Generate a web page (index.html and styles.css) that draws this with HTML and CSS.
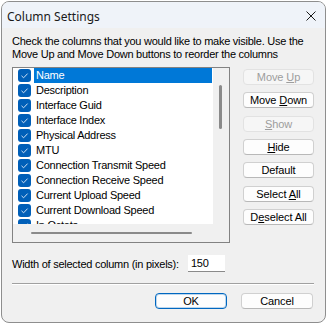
FILE: index.html
```html
<!DOCTYPE html>
<html>
<head>
<meta charset="utf-8">
<link rel="stylesheet" href="styles.css">
</head>
<body>
<div class="window">
  <div class="titlebar">
    <span class="title">Column Settings</span>
    <svg class="close" width="10" height="10" viewBox="0 0 10 10"><path d="M0.5 0.5 L9.5 9.5 M9.5 0.5 L0.5 9.5" stroke="#1a1a1a" stroke-width="1" fill="none"/></svg>
  </div>
  <div class="content">
    <p class="desc">Check the columns that you would like to make visible. Use the<br>Move Up and Move Down buttons to reorder the columns</p>
    <div class="main">
      <div class="listbox">
        <ul class="items">
          <li class="item selected"><span class="cb"><svg width="13" height="13" viewBox="0 0 13 13"><path d="M3.5 6.8 L5.6 8.8 L9.6 4.6" stroke="#cfe0f3" stroke-width="1" fill="none"/></svg></span><span class="label">Name</span></li>
          <li class="item"><span class="cb"><svg width="13" height="13" viewBox="0 0 13 13"><path d="M3.5 6.8 L5.6 8.8 L9.6 4.6" stroke="#cfe0f3" stroke-width="1" fill="none"/></svg></span><span class="label">Description</span></li>
          <li class="item"><span class="cb"><svg width="13" height="13" viewBox="0 0 13 13"><path d="M3.5 6.8 L5.6 8.8 L9.6 4.6" stroke="#cfe0f3" stroke-width="1" fill="none"/></svg></span><span class="label">Interface Guid</span></li>
          <li class="item"><span class="cb"><svg width="13" height="13" viewBox="0 0 13 13"><path d="M3.5 6.8 L5.6 8.8 L9.6 4.6" stroke="#cfe0f3" stroke-width="1" fill="none"/></svg></span><span class="label">Interface Index</span></li>
          <li class="item"><span class="cb"><svg width="13" height="13" viewBox="0 0 13 13"><path d="M3.5 6.8 L5.6 8.8 L9.6 4.6" stroke="#cfe0f3" stroke-width="1" fill="none"/></svg></span><span class="label">Physical Address</span></li>
          <li class="item"><span class="cb"><svg width="13" height="13" viewBox="0 0 13 13"><path d="M3.5 6.8 L5.6 8.8 L9.6 4.6" stroke="#cfe0f3" stroke-width="1" fill="none"/></svg></span><span class="label">MTU</span></li>
          <li class="item"><span class="cb"><svg width="13" height="13" viewBox="0 0 13 13"><path d="M3.5 6.8 L5.6 8.8 L9.6 4.6" stroke="#cfe0f3" stroke-width="1" fill="none"/></svg></span><span class="label">Connection Transmit Speed</span></li>
          <li class="item"><span class="cb"><svg width="13" height="13" viewBox="0 0 13 13"><path d="M3.5 6.8 L5.6 8.8 L9.6 4.6" stroke="#cfe0f3" stroke-width="1" fill="none"/></svg></span><span class="label">Connection Receive Speed</span></li>
          <li class="item"><span class="cb"><svg width="13" height="13" viewBox="0 0 13 13"><path d="M3.5 6.8 L5.6 8.8 L9.6 4.6" stroke="#cfe0f3" stroke-width="1" fill="none"/></svg></span><span class="label">Current Upload Speed</span></li>
          <li class="item"><span class="cb"><svg width="13" height="13" viewBox="0 0 13 13"><path d="M3.5 6.8 L5.6 8.8 L9.6 4.6" stroke="#cfe0f3" stroke-width="1" fill="none"/></svg></span><span class="label">Current Download Speed</span></li>
          <li class="item"><span class="cb"><svg width="13" height="13" viewBox="0 0 13 13"><path d="M3.5 6.8 L5.6 8.8 L9.6 4.6" stroke="#cfe0f3" stroke-width="1" fill="none"/></svg></span><span class="label">In Octets</span></li>
        </ul>
        <div class="vscroll"><div class="vthumb"></div></div>
        <div class="hscroll"><div class="hthumb"></div></div>
        <div class="corner"></div>
      </div>
      <div class="buttons">
        <button class="btn disabled">Move <u>U</u>p</button>
        <button class="btn">Move <u>D</u>own</button>
        <button class="btn disabled"><u>S</u>how</button>
        <button class="btn"><u>H</u>ide</button>
        <button class="btn">Default</button>
        <button class="btn">Select <u>A</u>ll</button>
        <button class="btn">D<u>e</u>select All</button>
      </div>
    </div>
    <div class="width-row">
      <span class="width-label">Width of selected column (in pixels):</span>
      <div class="input">150</div>
    </div>
    <div class="sep"></div>
    <div class="actions">
      <button class="btn primary">OK</button>
      <button class="btn">Cancel</button>
    </div>
  </div>
</div>
</body>
</html>
```

FILE: styles.css
```css
* { box-sizing: border-box; }
html, body { margin: 0; padding: 0; }
body { background: #ffffff; width: 327px; height: 324px; overflow: hidden; }

.window {
  margin: 1px 0 0 1px;
  width: 325px;
  height: 322px;
  border: 1px solid #8e8e8e;
  border-radius: 8px;
  background: #f0f0f0;
  overflow: hidden;
  font-family: "Liberation Sans", Arial, sans-serif;
  font-size: 11px;
  letter-spacing: -0.25px;
  color: #000;
}

.titlebar {
  height: 26px;
  background: #eff3f9;
  display: flex;
  align-items: center;
  justify-content: space-between;
  padding: 0 9px 0 5px;
}
.title {
  font-family: "Noto Sans", "Open Sans", sans-serif;
  font-size: 12px;
  letter-spacing: 0;
  color: #1a1a1a;
  padding-top: 2px;
}
.close { display: block; margin-top: 1px; }

.content { padding: 0 11px 0 10px; }

.desc {
  margin: 7px 0 0 0;
  line-height: 13px;
  white-space: nowrap;
}

.main {
  display: flex;
  gap: 13px;
  margin-top: 6px;
}

.listbox {
  width: 218px;
  height: 176px;
  border: 1px solid #828282;
  display: grid;
  grid-template-columns: 200px 16px;
  grid-template-rows: 156px 18px;
  background: #f0f0f0;
}

.items {
  list-style: none;
  margin: 0;
  padding: 0;
  background: #fff;
  overflow: hidden;
}
.item {
  height: 15px;
  display: flex;
  align-items: center;
  padding-left: 5px;
}
.cb {
  width: 13px;
  height: 13px;
  border-radius: 3px;
  background: #005fb8;
  display: block;
  flex: none;
}
.cb svg { display: block; }
.label {
  margin-left: 3px;
  padding-left: 2px;
  height: 15px;
  line-height: 15px;
  white-space: nowrap;
}
.item.selected .label {
  background: #0078d7;
  color: #fff;
  flex: 1;
  margin-right: 1px;
}

.vscroll {
  background: #f0f0f0;
  padding: 17px 0 0 6px;
}
.vthumb {
  width: 3px;
  height: 44px;
  background: #8a8a8a;
  border-radius: 1.5px;
}
.hscroll {
  background: #f0f0f0;
  padding: 8px 0 0 18px;
}
.hthumb {
  width: 161px;
  height: 2px;
  background: #8a8a8a;
  border-radius: 1px;
}
.corner { background: #f0f0f0; }

.buttons {
  display: flex;
  flex-direction: column;
  gap: 7.33px;
  margin-top: 2px;
}

.btn {
  font-family: "Liberation Sans", Arial, sans-serif;
  font-size: 11px;
  letter-spacing: -0.1px;
  color: #000;
  background: #fdfdfd;
  border: 1px solid #d0d0d0;
  border-bottom-color: #b8b8b8;
  border-radius: 4px;
  width: 71px;
  height: 16px;
  padding: 0;
  line-height: 14px;
  text-align: center;
  display: block;
}
.btn u { text-underline-offset: 1px; }
.btn.disabled {
  color: #9d9d9d;
  background: #f6f6f6;
  border-color: #e2e2e2;
}
.btn.primary {
  border: 1px solid #0067c0;
  box-shadow: inset 0 0 0 1px rgba(0, 103, 192, 0.25);
}

.width-row {
  display: flex;
  align-items: center;
  margin-top: 12px;
  height: 17px;
}
.width-label { width: 176px; white-space: nowrap; }
.input {
  width: 37px;
  height: 17px;
  background: #fff;
  border-bottom: 1px solid #8a8a8a;
  padding-left: 3px;
  line-height: 16px;
}

.sep {
  margin-top: 11px;
  width: 302px;
  border-top: 1px solid #a0a0a0;
  border-bottom: 1px solid #ffffff;
}

.actions {
  display: flex;
  justify-content: flex-end;
  gap: 14px;
  margin-top: 8px;
  padding-right: 1px;
}
.actions .btn { width: 72px; height: 16px; }
```
